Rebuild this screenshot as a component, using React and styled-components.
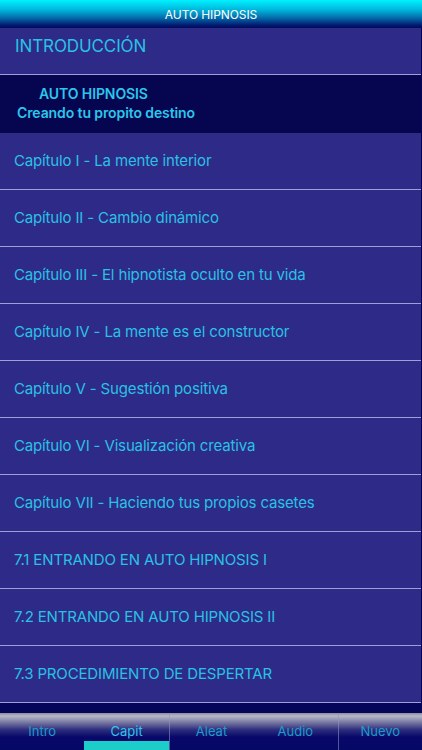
import React from "react";
import styled, { createGlobalStyle } from "styled-components";

const Global = createGlobalStyle`
  html, body { margin: 0; padding: 0; background: #05065a; }
  body { font-family: "Inter", "Liberation Sans", sans-serif; -webkit-font-smoothing: antialiased; }
  * { box-sizing: border-box; }
`;

const Screen = styled.div`
  width: 422px;
  height: 750px;
  display: flex;
  flex-direction: column;
  background: #05065a;
  overflow: hidden;
`;

const Header = styled.div`
  height: 28px;
  flex: none;
  display: flex;
  align-items: center;
  justify-content: center;
  background: linear-gradient(to bottom, #00f2ff 0%, #00b6dc 35%, #0468a8 65%, #021a70 90%, #020a5c 100%);
  color: #ffffff;
  font-size: 12px;
  font-weight: 400;
  letter-spacing: -0.1px;
  padding-top: 1px;
`;

const List = styled.div`
  flex: 1;
  display: flex;
  flex-direction: column;
  padding-right: 1px;
`;

const IntroRow = styled.div`
  height: 47px;
  flex: none;
  background: #2e2a87;
  border-bottom: 1.5px solid #a09ed6;
  color: #29c2e4;
  font-size: 17px;
  padding: 8px 0 0 15px;
  letter-spacing: -0.1px;
`;

const TitleRow = styled.div`
  height: 58px;
  flex: none;
  background: #060550;
  color: #2bc6ea;
  font-size: 14px;
  font-weight: 600;
  display: flex;
  flex-direction: column;
  justify-content: center;
  padding: 0 0 3px 17px;
  line-height: 19px;
  letter-spacing: -0.1px;
`;

const TitleLine = styled.span`
  padding-left: ${(p) => p.$indent || 0}px;
`;

const ChapterRow = styled.div`
  height: 57px;
  flex: none;
  background: #2e2a87;
  border-bottom: 1.5px solid #a09ed6;
  color: #29c2e4;
  font-size: 15px;
  display: flex;
  align-items: center;
  padding: 0 0 1px 14px;
  letter-spacing: -0.15px;
`;

const TabBar = styled.div`
  height: 37px;
  flex: none;
  display: grid;
  grid-template-columns: repeat(5, 1fr);
  background: linear-gradient(to bottom, #8a8aa0 0%, #b8b8c8 8%, #8484aa 22%, #2e2e7e 45%, #07086a 65%, #060866 100%);
`;

const Tab = styled.div`
  position: relative;
  display: flex;
  align-items: center;
  justify-content: center;
  padding-bottom: 1px;
  font-size: 13px;
  color: ${(p) => (p.$active ? "#2ec4ec" : "#1c9ccb")};
  border-left: ${(p) => (p.$divider ? "1px solid rgba(150,150,190,0.55)" : "none")};
`;

const Indicator = styled.span`
  position: absolute;
  left: 0;
  right: 0;
  bottom: 0;
  height: 9px;
  background: #1ccdc9;
`;

const chapters = [
  "Capítulo I - La mente interior",
  "Capítulo II - Cambio dinámico",
  "Capítulo III - El hipnotista oculto en tu vida",
  "Capítulo IV - La mente es el constructor",
  "Capítulo V - Sugestión positiva",
  "Capítulo VI - Visualización creativa",
  "Capítulo VII - Haciendo tus propios casetes",
  "7.1 ENTRANDO EN AUTO HIPNOSIS I",
  "7.2 ENTRANDO EN AUTO HIPNOSIS II",
  "7.3 PROCEDIMIENTO DE DESPERTAR",
];

const tabs = [
  { label: "Intro" },
  { label: "Capit", active: true },
  { label: "Aleat", divider: true },
  { label: "Audio" },
  { label: "Nuevo", divider: true },
];

export default function App() {
  return (
    <>
      <Global />
      <Screen>
        <Header>AUTO HIPNOSIS</Header>
        <List>
          <IntroRow>INTRODUCCIÓN</IntroRow>
          <TitleRow>
            <TitleLine $indent={22}>AUTO HIPNOSIS</TitleLine>
            <TitleLine>Creando tu propito destino</TitleLine>
          </TitleRow>
          {chapters.map((c) => (
            <ChapterRow key={c}>{c}</ChapterRow>
          ))}
        </List>
        <TabBar>
          {tabs.map((t) => (
            <Tab key={t.label} $active={t.active} $divider={t.divider}>
              {t.label}
              {t.active && <Indicator />}
            </Tab>
          ))}
        </TabBar>
      </Screen>
    </>
  );
}
